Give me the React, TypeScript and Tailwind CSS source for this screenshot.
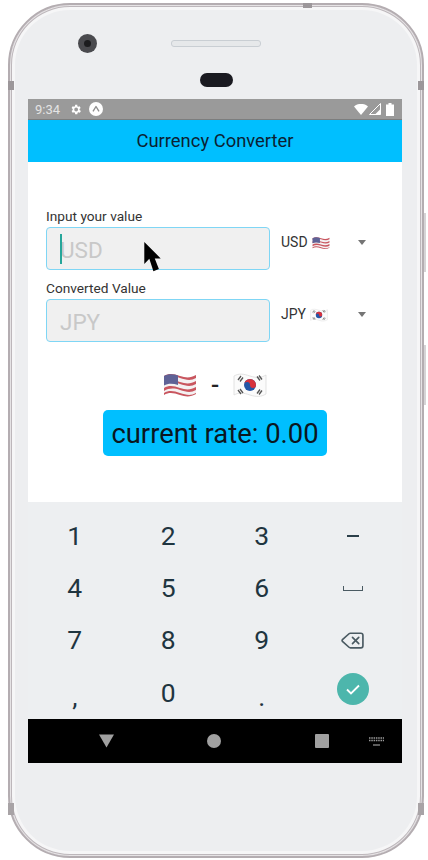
import React from "react";
import { Delete } from "lucide-react";

const FONT = "font-['Roboto',sans-serif]";

/* ---------------------------------- Flags --------------------------------- */

const UsFlag: React.FC<{ className?: string }> = ({ className }) => (
  <svg viewBox="0 0 34 28" className={className}>
    <path d="M1 5c5-3 10-2 16 0s11 2 16-1v19c-5 3-10 3-16 1s-11-3-16 0Z" fill="#f4f1f2" />
    <path d="M1 5c5-3 10-2 16 0s11 2 16-1v3c-5 3-10 2-16 0S6 5 1 8Z" fill="#c9565f" />
    <path d="M1 11c5-3 10-2 16 0s11 2 16-1v3c-5 3-10 2-16 0s-11-2-16 1Z" fill="#c9565f" />
    <path d="M1 17c5-3 10-2 16 0s11 2 16-1v3c-5 3-10 2-16 0s-11-2-16 1Z" fill="#c9565f" />
    <path d="M1 22c5-3 10-2 16 0s11 3 16 0v1c-5 3-10 3-16 1s-11-3-16 0Z" fill="#c9565f" />
    <path d="M1 5c4-2.500 9-2.200 14-.6V14c-5-1.500-10-1.800-14 .6Z" fill="#5f6296" />
  </svg>
);

const KrFlag: React.FC<{ className?: string }> = ({ className }) => (
  <svg viewBox="0 0 34 28" className={className}>
    <path d="M1 5c5-3 10-2 16 0s11 2 16-1v19c-5 3-10 3-16 1s-11-3-16 0Z" fill="#fbfbfb" stroke="#dcdcdc" strokeWidth={0.8} />
    <circle cx="17" cy="14" r="6" fill="#2456a6" />
    <path d="M11 14a6 6 0 0 1 12 0 3 3 0 0 1-6 0 3 3 0 0 0-6 0Z" fill="#d8313c" />
    <g stroke="#555" strokeWidth={1.300}>
      <path d="m5 9 3-4M7 10.500l3-4" />
      <path d="m24 5.500 3 4M26 4.500l3 4" />
      <path d="m5 19 3 4M7 18l3 4" />
      <path d="m24 22.500 3-4M26 23.500l3-4" />
    </g>
  </svg>
);

/* --------------------------------- Status --------------------------------- */

const GearIcon: React.FC = () => (
  <svg viewBox="0 0 24 24" className="h-[13px] w-[13px]" fill="#fff">
    <path d="M19.400 13a7.500 7.500 0 0 0 0-2l2.100-1.600-2-3.500-2.500 1a7.500 7.500 0 0 0-1.700-1L15.400 3.200h-4l-.4 2.700a7.500 7.500 0 0 0-1.700 1l-2.500-1-2 3.500L6.900 11a7.500 7.500 0 0 0 0 2l-2.100 1.600 2 3.500 2.500-1a7.500 7.500 0 0 0 1.700 1l.4 2.700h4l.4-2.700a7.500 7.500 0 0 0 1.700-1l2.500 1 2-3.500ZM13.200 15.500a3.500 3.500 0 1 1 0-7 3.500 3.500 0 0 1 0 7Z" />
  </svg>
);

const ExpoIcon: React.FC = () => (
  <svg viewBox="0 0 14 14" className="ml-[7px] h-[14px] w-[14px]">
    <circle cx="7" cy="7" r="7" fill="#fff" />
    <path d="M4 9.300 7 4.500l3 4.800" fill="none" stroke="#8f8f8f" strokeWidth={1.400} strokeLinejoin="round" />
  </svg>
);

const StatusBar: React.FC = () => (
  <div className="flex h-[21px] items-center border-b border-[#7d7d7d] bg-[#9a9a9a] pl-[7px] pr-[8px]">
    <span className="mr-[9px] text-[13px] leading-none text-[#e4e4e4]">9:34</span>
    <GearIcon />
    <ExpoIcon />
    <div className="ml-auto flex items-center gap-[1px]">
      <svg viewBox="0 0 14 11" className="h-[11px] w-[14px]">
        <path d="M0 2.500C4-1 10-1 14 2.500L7 11Z" fill="#fff" />
      </svg>
      <svg viewBox="0 0 12 12" className="h-[12px] w-[12px]">
        <path d="M11.500.500v11H.500Z" fill="none" stroke="#fff" strokeWidth={1} />
        <path d="M11.500 6v5.500H6Z" fill="#fff" />
      </svg>
      <svg viewBox="0 0 8 13" className="ml-[4px] h-[13px] w-[8px]">
        <path d="M2.500 0h3v1.500H8V13H0V1.500h2.500Z" fill="#fff" />
      </svg>
    </div>
  </div>
);

/* ---------------------------------- Form ---------------------------------- */

const FieldRow: React.FC<{ label: string; placeholder: string; currency: string; flag: React.ReactNode; focused?: boolean }> = ({
  label,
  placeholder,
  currency,
  flag,
  focused,
}) => (
  <div className="flex flex-col">
    <span className="h-[19px] text-[13.700px] leading-[17px] text-[#333]">{label}</span>
    <div className="flex">
      <div className="relative flex h-[43px] w-[224px] items-center rounded-[4px] border border-[#7fd6f5] bg-[#f0f0f0] pl-[13px] pt-[3px]">
        {focused && <div className="absolute left-[13px] top-[6px] h-[30px] w-[2px] bg-[#26a69a]" />}
        <span className="text-[22.500px] leading-none text-[#c8c8c8]">{placeholder}</span>
      </div>
      <div className="flex h-[31px] flex-1 items-center pl-[11px] pr-[36px]">
        <span className="text-[14px] text-[#333]">{currency}</span>
        <span className="ml-[4px]">{flag}</span>
        <div className="ml-auto h-0 w-0 border-x-[4.500px] border-t-[5px] border-x-transparent border-t-[#757575]" />
      </div>
    </div>
  </div>
);

/* -------------------------------- Keyboard -------------------------------- */

const KEY_TEXT = "text-[26.500px] leading-none text-[#1f3540]";

const Keyboard: React.FC = () => {
  const keys: React.ReactNode[] = [
    "1", "2", "3",
    <div className="mr-[5px] h-[2px] w-[12px] bg-[#2b3f49]" />,
    "4", "5", "6",
    <div className="mr-[5px] h-[5px] w-[20px] border-x-[1.500px] border-b-[1.500px] border-[#4a5a62]" />,
    "7", "8", "9",
    <Delete size={25} strokeWidth={1.6} className="mr-[5px] text-[#4a5a62]" />,
    <span className="mt-[8px] block">,</span>,
    "0",
    <span className="mt-[8px] block">.</span>,
    <div className="mb-[8px] mr-[4px] flex h-[32px] w-[32px] items-center justify-center rounded-full bg-[#4db6ac]">
      <svg viewBox="0 0 16 16" className="h-[16px] w-[16px]" fill="none" stroke="#fff" strokeWidth={1.800}>
        <path d="m2 8.500 4 4 8-8" />
      </svg>
    </div>,
  ];
  return (
    <div className="grid h-[217px] grid-cols-4 grid-rows-4 bg-[#edeff1] pt-[8px]">
      {keys.map((key, i) => (
        <div key={i} className={`flex items-center justify-center ${KEY_TEXT}`}>
          {key}
        </div>
      ))}
    </div>
  );
};

/* -------------------------------- Component ------------------------------- */

export default function App() {
  return (
    <div className={`min-h-[860px] overflow-hidden bg-white pl-[8px] pt-[3px] ${FONT}`}>
      <div className="relative h-[855px] w-[416px] rounded-[62px] border-[2px] border-[#b4adb1] bg-[#edeef0] shadow-[inset_0_0_0_1px_#e6e3e5,inset_0_0_0_2px_#bdb7bb,inset_0_0_0_5px_#f6f6f7]">
        {/* antenna bands and side buttons */}
        <div className="absolute -left-[2px] top-[76px] h-[9px] w-[6px] bg-[#9c979a]" />
        <div className="absolute -right-[2px] top-[76px] h-[9px] w-[6px] bg-[#9c979a]" />
        <div className="absolute -top-[2px] left-[293px] h-[5px] w-[9px] bg-[#9c979a]" />
        <div className="absolute -left-[2px] bottom-[41px] h-[12px] w-[6px] bg-[#a8a3a6]" />
        <div className="absolute -right-[2px] bottom-[41px] h-[12px] w-[6px] bg-[#a8a3a6]" />
        <div className="absolute -right-[4px] top-[208px] h-[59px] w-[2px] bg-[#d6d4d6]" />
        <div className="absolute -right-[4px] top-[340px] h-[60px] w-[2px] bg-[#d6d4d6]" />

        {/* top bezel */}
        <div className="relative flex h-[94px] flex-col items-center">
          <div className="absolute left-[68px] top-[29px] flex h-[19px] w-[19px] items-center justify-center rounded-full bg-[#4a4a4e]">
            <div className="h-[7px] w-[7px] rounded-full bg-[#1c1c1e]" />
          </div>
          <div className="mt-[35px] h-[7px] w-[90px] rounded-[3px] border border-[#c9ced3] bg-[#e6e8ea]" />
          <div className="mt-[26px] h-[14px] w-[33px] rounded-full bg-[#1a1a20]" />
        </div>

        {/* screen */}
        <div className="relative ml-[18px] w-[374px]">
          <StatusBar />
          <div className="flex h-[42px] items-center justify-center bg-[#00bfff] text-[18.400px] text-[#0b1f33]">
            Currency Converter
          </div>
          <div className="flex h-[340px] flex-col gap-[2px] bg-white pl-[18px] pt-[46px]">
            <FieldRow label="Input your value" placeholder="USD" currency="USD" focused flag={<UsFlag className="h-[16px] w-[18px]" />} />
            <div className="mt-[8px]">
              <FieldRow label="Converted Value" placeholder="JPY" currency="JPY" flag={<KrFlag className="h-[16px] w-[18px]" />} />
            </div>
            <div className="-ml-[18px] mt-[27px] flex items-center justify-center">
              <UsFlag className="h-[28px] w-[34px]" />
              <span className="mx-[14px] text-[24px] font-medium leading-none text-[#222]">-</span>
              <KrFlag className="h-[28px] w-[34px]" />
            </div>
            <div className="-ml-[18px] mt-[9px] flex justify-center">
              <div className="flex h-[46px] w-[224px] items-center justify-center rounded-[5px] bg-[#00bfff] pt-[3px] text-[27.400px] text-[#0a1620]">
                current rate: 0.00
              </div>
            </div>
          </div>
          <Keyboard />
          <div className="flex h-[44px] items-center bg-black pl-[71px]">
            <svg viewBox="0 0 16 14" className="h-[14px] w-[15px]">
              <path d="M0 0h16L8 14Z" fill="#a0a0a0" />
            </svg>
            <div className="ml-[93px] h-[14px] w-[14px] rounded-full bg-[#a0a0a0]" />
            <div className="ml-[94px] h-[14px] w-[14px] rounded-[1px] bg-[#a0a0a0]" />
            <svg viewBox="0 0 15 9" className="ml-[40px] h-[9px] w-[15px]">
              <path d="M0 1h15M0 3.500h15" stroke="#9a9a9a" strokeWidth={1.500} strokeDasharray="1.500 0.800" />
              <path d="M4 8h7" stroke="#9a9a9a" strokeWidth={1.200} />
            </svg>
          </div>

          {/* mouse pointer from the recording */}
          <svg viewBox="0 0 20 34" className="absolute left-[115px] top-[143px] h-[31px] w-[19px]">
            <path d="M1 0v24l5.500-5.500L11 32l6-2.500-4.500-11.500H19Z" fill="#000" />
          </svg>
        </div>
      </div>
    </div>
  );
}
